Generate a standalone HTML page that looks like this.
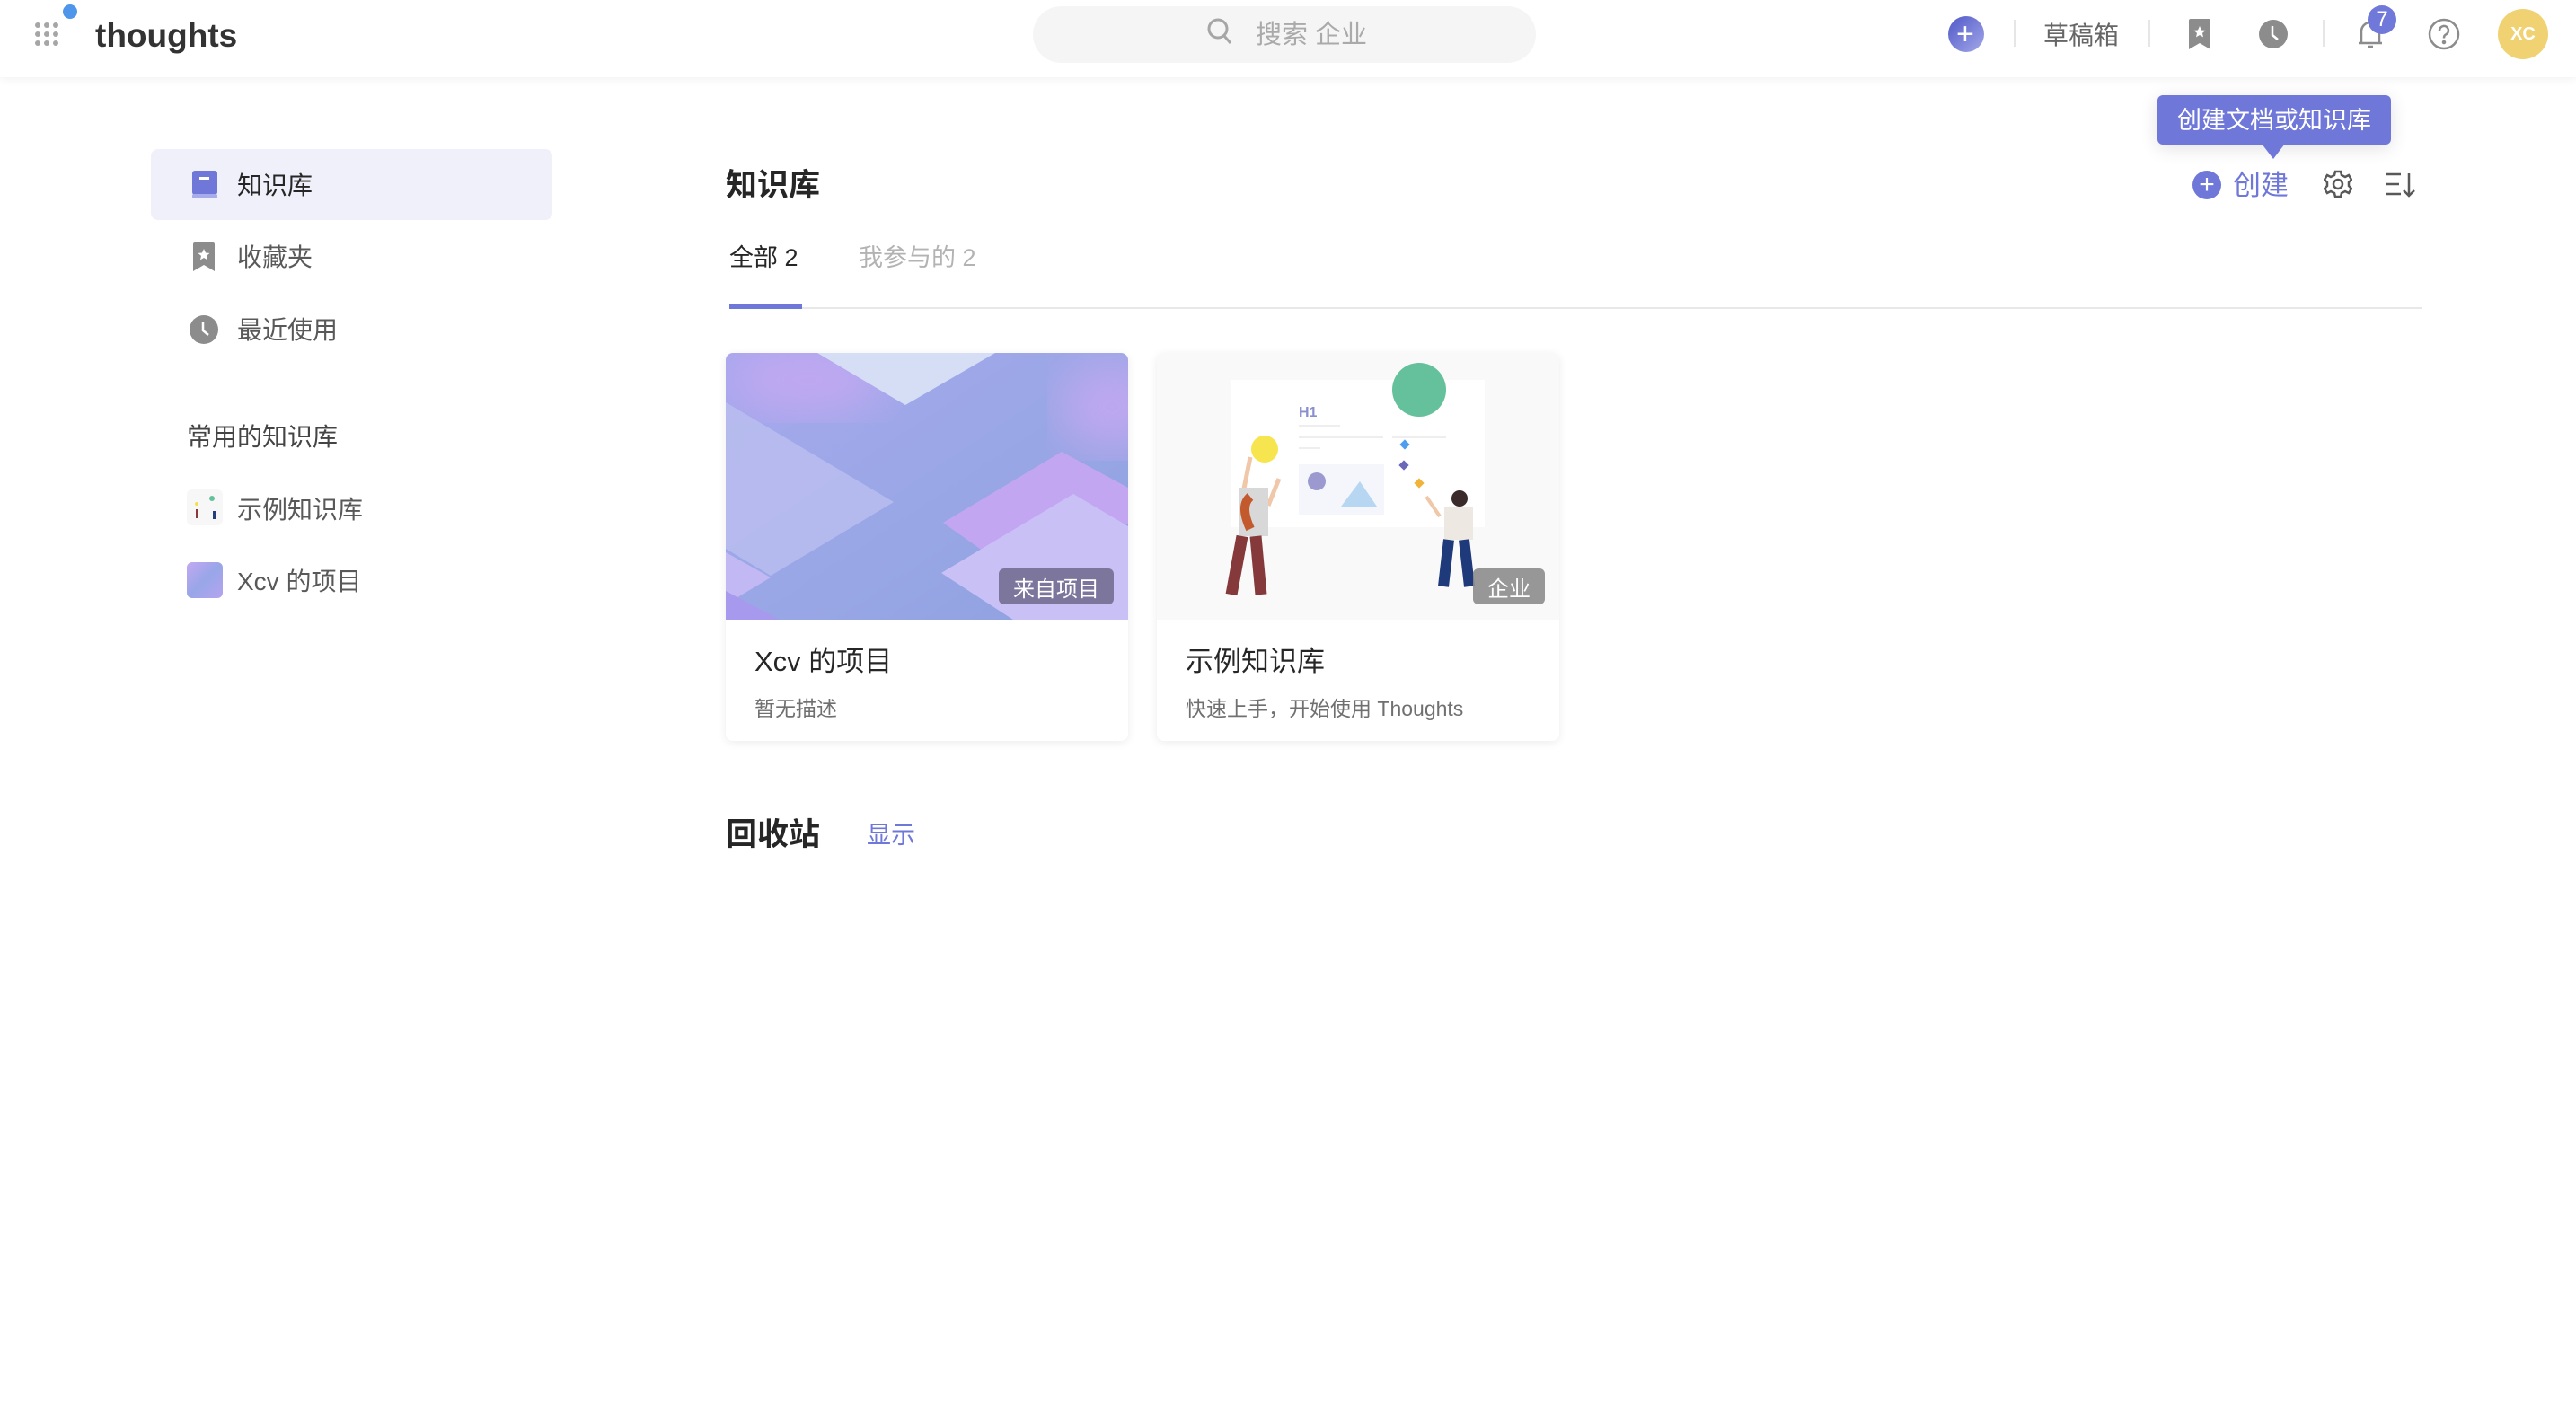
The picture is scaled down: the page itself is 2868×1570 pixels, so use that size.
<!DOCTYPE html>
<html><head><meta charset="utf-8"><style>
*{margin:0;padding:0;box-sizing:border-box}
body{width:2868px;height:1570px;background:#fff;font-family:"Liberation Sans","Noto Sans CJK SC",sans-serif;position:relative;overflow:hidden;color:#262626}
.a{position:absolute}
.hdr{left:0;top:0;width:2868px;height:86px;background:#fff;box-shadow:0 2px 10px rgba(0,0,0,.06)}
.t{white-space:nowrap;line-height:1}
.div{width:2px;height:30px;background:#e6e6e6;top:22px}
.card{border-radius:8px;box-shadow:0 2px 10px rgba(0,0,0,.08);background:#fff;overflow:hidden;width:448px;height:432px;top:393px}
.badge{border-radius:6px;color:#fff;font-size:24px;display:flex;align-items:center;justify-content:center}
</style></head><body>
<div class="a hdr"></div>
<svg class="a" style="left:38px;top:24px" width="32" height="30"><g fill="#a6a6a6"><circle cx="4" cy="4" r="3"/><circle cx="14" cy="4" r="3"/><circle cx="24" cy="4" r="3"/><circle cx="4" cy="14" r="3"/><circle cx="14" cy="14" r="3"/><circle cx="24" cy="14" r="3"/><circle cx="4" cy="24" r="3"/><circle cx="14" cy="24" r="3"/><circle cx="24" cy="24" r="3"/></g></svg>
<div class="a" style="left:70px;top:5px;width:16px;height:16px;border-radius:50%;background:#4d96ea"></div>
<div class="a t" style="left:106px;top:21px;font-size:37px;font-weight:bold;color:#333">thoughts</div>
<div class="a" style="left:1150px;top:7px;width:560px;height:63px;border-radius:32px;background:#f5f5f5"></div>
<svg class="a" style="left:1343px;top:19px" width="32" height="34" fill="none" stroke="#a6a6a6" stroke-width="3"><circle cx="13" cy="13" r="10"/><path d="M20 21l7 8"/></svg>
<div class="a t" style="left:1398px;top:25px;font-size:29px;color:#aaa">搜索 企业</div>
<div class="a" style="left:2169px;top:18px;width:40px;height:40px;border-radius:50%;background:linear-gradient(135deg,#5058c8,#a3a8e8)"></div>
<div class="a t" style="left:2178px;top:21px;font-size:34px;color:#fff">+</div>
<div class="a div" style="left:2242px"></div>
<div class="a t" style="left:2275px;top:26px;font-size:28px;color:#666">草稿箱</div>
<div class="a div" style="left:2392px"></div>
<svg class="a" style="left:2437px;top:21px" width="24" height="34"><path d="M0 2q0-2 2-2h20q2 0 2 2v32l-12-7-12 7z" fill="#8c8c8c"/><path d="M12 8l2 4.5 4.5.4-3.5 3 1 4.5-4-2.4-4 2.4 1-4.5-3.5-3 4.5-.4z" fill="#fff"/></svg>
<svg class="a" style="left:2514px;top:21px" width="34" height="34"><circle cx="17" cy="17" r="16" fill="#8c8c8c"/><path d="M16 8v10l6 5" stroke="#fff" stroke-width="2.5" fill="none"/></svg>
<div class="a div" style="left:2586px"></div>
<svg class="a" style="left:2624px;top:20px" width="30" height="36" fill="none" stroke="#8c8c8c" stroke-width="2.5"><path d="M5 27V15a10 10 0 0 1 20 0v12M2 28h26M12 32h6"/></svg>
<div class="a" style="left:2636px;top:6px;width:32px;height:32px;border-radius:50%;background:#7078da;color:#fff;font-size:24px;text-align:center;line-height:32px">7</div>
<svg class="a" style="left:2703px;top:20px" width="36" height="36" fill="none" stroke="#8c8c8c" stroke-width="2.5"><circle cx="18" cy="18" r="16"/><path d="M13 14a5 5 0 1 1 7 4.5q-2 1-2 4"/><circle cx="18" cy="27" r="1" fill="#8c8c8c"/></svg>
<div class="a" style="left:2781px;top:10px;width:56px;height:56px;border-radius:50%;background:#f0d273;color:#fff;font-size:20px;font-weight:bold;text-align:center;line-height:56px">XC</div>
<div class="a" style="left:168px;top:166px;width:447px;height:79px;border-radius:8px;background:#f0f0fa"></div>
<svg class="a" style="left:214px;top:190px" width="28" height="32"><rect x="0" y="0" width="28" height="27" rx="3" fill="#6f77d9"/><rect x="0" y="26" width="28" height="5" rx="2" fill="#a7acea"/><rect x="8" y="7" width="11" height="3" fill="#fff"/></svg>
<div class="a t" style="left:264px;top:193px;font-size:28px;color:#262626">知识库</div>
<svg class="a" style="left:215px;top:270px" width="24" height="32"><path d="M0 2q0-2 2-2h20q2 0 2 2v30l-12-7-12 7z" fill="#8c8c8c"/><path d="M12 7l2 4.5 4.5.4-3.5 3 1 4.5-4-2.4-4 2.4 1-4.5-3.5-3 4.5-.4z" fill="#fff"/></svg>
<div class="a t" style="left:264px;top:273px;font-size:28px;color:#595959">收藏夹</div>
<svg class="a" style="left:210px;top:350px" width="34" height="34"><circle cx="17" cy="17" r="16" fill="#8c8c8c"/><path d="M16 8v10l6 5" stroke="#fff" stroke-width="2.5" fill="none"/></svg>
<div class="a t" style="left:264px;top:354px;font-size:28px;color:#595959">最近使用</div>
<div class="a t" style="left:208px;top:473px;font-size:28px;color:#444">常用的知识库</div>
<div class="a" style="left:208px;top:545px;width:40px;height:40px;border-radius:6px;background:#f7f7f7"></div>
<svg class="a" style="left:208px;top:545px" width="40" height="40"><circle cx="28" cy="10" r="3" fill="#65c19b"/><circle cx="11" cy="16" r="2" fill="#f4e04d"/><rect x="10" y="22" width="3" height="10" fill="#8a3a3a"/><rect x="29" y="24" width="3" height="9" fill="#24407a"/></svg>
<div class="a t" style="left:264px;top:554px;font-size:28px;color:#595959">示例知识库</div>
<div class="a" style="left:208px;top:626px;width:40px;height:40px;border-radius:6px;background:linear-gradient(135deg,#c4a8f2,#98a6e8 50%,#b5a4f0)"></div>
<div class="a t" style="left:264px;top:634px;font-size:28px;color:#595959">Xcv 的项目</div>
<div class="a t" style="left:808px;top:189px;font-size:35px;font-weight:bold;color:#262626">知识库</div>
<div class="a t" style="left:812px;top:274px;font-size:27px;color:#262626">全部 2</div>
<div class="a t" style="left:956px;top:274px;font-size:27px;color:#b3b3b3">我参与的 2</div>
<div class="a" style="left:812px;top:342px;width:1884px;height:2px;background:#e8e8e8"></div>
<div class="a" style="left:812px;top:338px;width:81px;height:6px;background:#6f77d9"></div>
<div class="a" style="left:2402px;top:106px;width:260px;height:55px;border-radius:6px;background:#6f77d9;box-shadow:0 4px 20px rgba(0,0,0,.12);color:#fff;font-size:27px;text-align:center;line-height:57px">创建文档或知识库</div>
<div class="a" style="left:2518px;top:160px;width:0;height:0;border-left:13px solid transparent;border-right:13px solid transparent;border-top:17px solid #6f77d9"></div>
<div class="a" style="left:2441px;top:190px;width:32px;height:32px;border-radius:50%;background:#6f77d9;color:#fff;font-size:30px;text-align:center;line-height:32px">+</div>
<div class="a t" style="left:2486px;top:191px;font-size:31px;color:#6f77d9">创建</div>
<svg class="a" style="left:2587px;top:189px" width="32" height="32" fill="none" stroke="#595959" stroke-width="2.5"><path d="M13 2h6l1 4 4 2 4-2 3 5-3 3v4l3 3-3 5-4-2-4 2-1 4h-6l-1-4-4-2-4 2-3-5 3-3v-4l-3-3 3-5 4 2 4-2z"/><circle cx="16" cy="16" r="5"/></svg>
<svg class="a" style="left:2656px;top:191px" width="34" height="30" fill="none" stroke="#595959" stroke-width="2.5"><path d="M1 3h16M1 14h14M1 25h16M26 2v25M20 21l6 6 6-6"/></svg>
<div class="a card" style="left:808px">
<svg width="448" height="297" style="display:block">
<defs>
<linearGradient id="g1" x1="0" y1="0" x2="1" y2="1"><stop offset="0" stop-color="#a7a8ee"/><stop offset=".5" stop-color="#9aa7e6"/><stop offset="1" stop-color="#8fa1e0"/></linearGradient>
<filter id="bl"><feGaussianBlur stdDeviation="25"/></filter>
</defs>
<rect width="448" height="297" fill="url(#g1)"/>
<ellipse cx="90" cy="30" rx="90" ry="40" fill="#c8a8f3" opacity=".8" filter="url(#bl)"/>
<ellipse cx="430" cy="60" rx="60" ry="50" fill="#c8a8f3" opacity=".8" filter="url(#bl)"/>
<polygon points="102,0 300,0 200,58" fill="#d6def5"/>
<polygon points="0,55 187,166 50,248 0,218" fill="#b8bdee" opacity=".9"/>
<polygon points="0,222 50,250 0,280" fill="#c2b8f3"/>
<polygon points="0,265 60,297 0,297" fill="#a79aee"/>
<polygon points="242,189 374,110 448,150 448,190 300,230" fill="#c3a6f2"/>
<polygon points="240,245 387,157 448,193 448,297 320,297" fill="#c9c1f6"/>
</svg>
<div class="a badge" style="left:304px;top:240px;width:128px;height:40px;background:rgba(110,105,140,.85)">来自项目</div>
<div class="a t" style="left:32px;top:328px;font-size:31px;color:#262626">Xcv 的项目</div>
<div class="a t" style="left:32px;top:385px;font-size:23px;color:#707070">暂无描述</div>
</div>
<div class="a card" style="left:1288px">
<svg width="448" height="297" style="display:block">
<rect width="448" height="297" fill="#f9f9f9"/>
<rect x="82" y="30" width="283" height="164" fill="#fff"/>
<text x="158" y="71" font-size="16" fill="#8a8fd0" font-family="Liberation Sans" font-weight="bold">H1</text>
<rect x="158" y="80" width="46" height="2" fill="#eee"/><rect x="158" y="93" width="94" height="2" fill="#eee"/><rect x="158" y="105" width="24" height="2" fill="#eee"/><rect x="262" y="93" width="60" height="2" fill="#eee"/>
<rect x="158" y="124" width="95" height="56" fill="#f4f6fb"/>
<circle cx="178" cy="143" r="10" fill="#9b99cf"/>
<polygon points="205,171 226,143 245,171" fill="#b6d6f2"/>
<circle cx="292" cy="41" r="30" fill="#65c19b"/>
<circle cx="120" cy="107" r="15" fill="#f6e54f"/>
<rect x="272" y="98" width="8" height="8" fill="#4e9ef0" transform="rotate(45 276 102)"/>
<rect x="271" y="121" width="8" height="8" fill="#6a68b8" transform="rotate(45 275 125)"/>
<rect x="288" y="141" width="8" height="8" fill="#f2b33a" transform="rotate(45 292 145)"/>
<path d="M104 116l-8 40M136 140l-12 30" stroke="#f0c7a8" stroke-width="5"/>
<rect x="92" y="150" width="32" height="54" fill="#d8d8d8"/>
<path d="M104 160q-12 10 0 36" stroke="#c25a2e" stroke-width="10" fill="none"/>
<path d="M95 204l-12 65M110 204l6 65" stroke="#85393a" stroke-width="13"/>
<path d="M300 160l15 22" stroke="#f0c7a8" stroke-width="4"/>
<circle cx="337" cy="162" r="9" fill="#3b2a2a"/>
<rect x="320" y="172" width="32" height="36" fill="#ede9e2"/>
<path d="M325 208l-6 52M342 208l6 52" stroke="#1f3a7a" stroke-width="12"/>
</svg>
<div class="a badge" style="left:352px;top:240px;width:80px;height:40px;background:rgba(140,140,140,.9)">企业</div>
<div class="a t" style="left:32px;top:328px;font-size:31px;color:#262626">示例知识库</div>
<div class="a t" style="left:32px;top:385px;font-size:23px;color:#707070">快速上手，开始使用 Thoughts</div>
</div>
<div class="a t" style="left:808px;top:912px;font-size:35px;font-weight:bold;color:#262626">回收站</div>
<div class="a t" style="left:965px;top:917px;font-size:27px;color:#6f77d9">显示</div>
</body></html>
